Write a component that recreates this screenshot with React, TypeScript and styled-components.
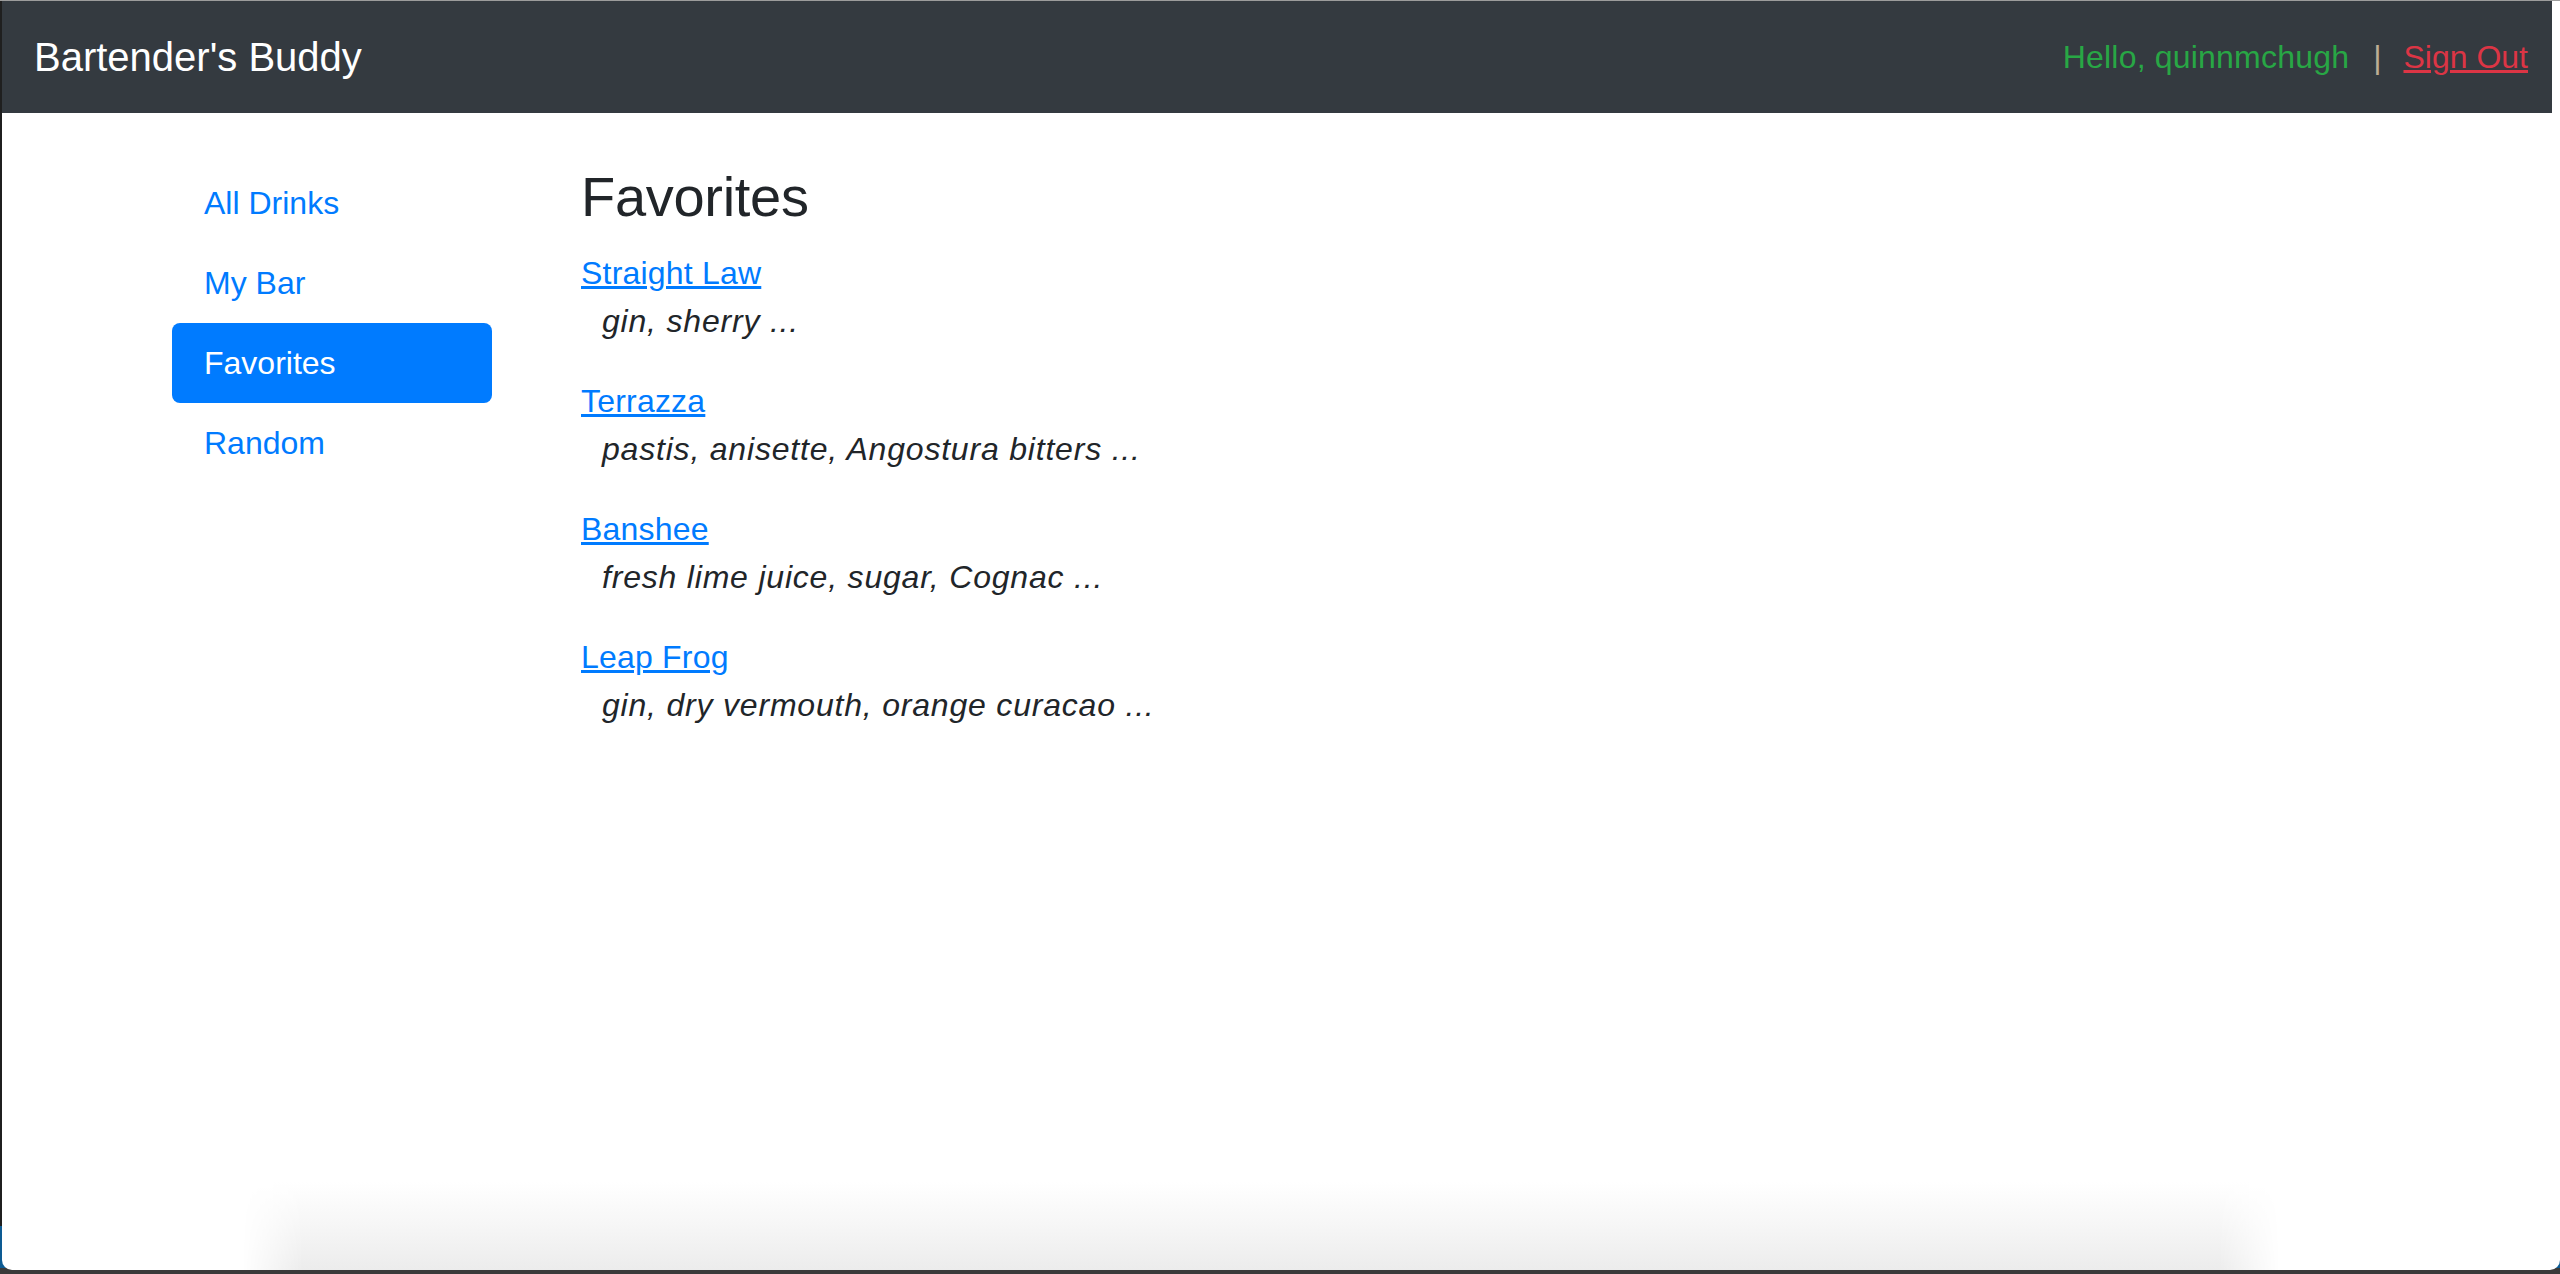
import React from "react";
import styled, { createGlobalStyle } from "styled-components";

const GlobalStyle = createGlobalStyle`
  html, body {
    margin: 0;
    padding: 0;
    height: 100%;
    background: #2a2a2a;
  }
  #root {
    height: 100%;
  }
  * {
    box-sizing: border-box;
  }
`;

const Frame = styled.div`
  height: 100vh;
  padding: 1px 0 4px 2px;
  background: linear-gradient(
    to bottom,
    #9c9c9c 0,
    #9c9c9c 1px,
    #1f1f1f 1px,
    #1f1f1f 1226px,
    #0d5b93 1226px,
    #0d5b93 1268px,
    #3a3a3a 1268px
  );
`;

const Window = styled.div`
  height: 100%;
  display: flex;
  flex-direction: column;
  background: #fff;
  border-radius: 0 0 10px 10px;
  overflow: hidden;
  font-family: "Liberation Sans", Arial, sans-serif;
  color: #212529;
`;

const Navbar = styled.nav`
  height: 112px;
  flex-shrink: 0;
  margin-right: 8px;
  padding: 16px 24px 16px 32px;
  background: #343a40;
  display: flex;
  align-items: center;
  justify-content: space-between;
`;

const Brand = styled.a`
  font-size: 40px;
  line-height: 60px;
  color: #fff;
  text-decoration: none;
  white-space: nowrap;
`;

const UserBox = styled.div`
  display: flex;
  align-items: center;
  font-size: 32px;
  line-height: 48px;
  white-space: nowrap;
`;

const Greeting = styled.span`
  color: #28a745;
  letter-spacing: 0.2px;
`;

const Divider = styled.span`
  margin: 0 22px 0 24px;
  color: #bdae96;
`;

const SignOut = styled.a`
  color: #dc3545;
  text-decoration: underline;
  cursor: pointer;
`;

const Body = styled.div`
  flex: 1;
  display: flex;
  align-items: flex-start;
  padding: 50px 0 0 170px;
`;

const Sidebar = styled.ul`
  width: 320px;
  margin: 0;
  padding: 0;
  list-style: none;
  display: flex;
  flex-direction: column;
`;

const Pill = styled.li<{ $active?: boolean }>`
  padding: 16px 32px;
  font-size: 32px;
  line-height: 48px;
  border-radius: 8px;
  cursor: pointer;
  color: ${(p) => (p.$active ? "#fff" : "#007bff")};
  background: ${(p) => (p.$active ? "#007bff" : "transparent")};
`;

const Main = styled.main`
  margin-left: 89px;
`;

const Title = styled.h3`
  margin: 0 0 19px;
  font-size: 56px;
  font-weight: 500;
  line-height: 1.2;
  letter-spacing: -0.3px;
`;

const Drink = styled.div`
  margin-bottom: 32px;
  font-size: 32px;
  line-height: 48px;
`;

const DrinkLink = styled.a`
  color: #007bff;
  text-decoration: underline;
  cursor: pointer;
  letter-spacing: 0.2px;
`;

const Ingredients = styled.div`
  padding-left: 21px;
  font-style: italic;
  letter-spacing: 0.8px;
`;

const BottomShade = styled.div`
  height: 88px;
  flex-shrink: 0;
  margin: 0 280px 0 240px;
  background: linear-gradient(to bottom, #ffffff 0%, #f6f6f6 50%, #ececec 100%);
  mask-image: linear-gradient(
    to right,
    transparent 0,
    #000 3%,
    #000 97%,
    transparent 100%
  );
`;

const drinks = [
  { name: "Straight Law", ingredients: "gin, sherry ..." },
  { name: "Terrazza", ingredients: "pastis, anisette, Angostura bitters ..." },
  { name: "Banshee", ingredients: "fresh lime juice, sugar, Cognac ..." },
  { name: "Leap Frog", ingredients: "gin, dry vermouth, orange curacao ..." },
];

const links = ["All Drinks", "My Bar", "Favorites", "Random"];

export default function App() {
  return (
    <>
      <GlobalStyle />
      <Frame>
        <Window>
          <Navbar>
            <Brand>Bartender's Buddy</Brand>
            <UserBox>
              <Greeting>Hello, quinnmchugh</Greeting>
              <Divider>|</Divider>
              <SignOut>Sign Out</SignOut>
            </UserBox>
          </Navbar>
          <Body>
            <Sidebar>
              {links.map((l) => (
                <Pill key={l} $active={l === "Favorites"}>
                  {l}
                </Pill>
              ))}
            </Sidebar>
            <Main>
              <Title>Favorites</Title>
              {drinks.map((d) => (
                <Drink key={d.name}>
                  <DrinkLink>{d.name}</DrinkLink>
                  <Ingredients>{d.ingredients}</Ingredients>
                </Drink>
              ))}
            </Main>
          </Body>
          <BottomShade />
        </Window>
      </Frame>
    </>
  );
}
